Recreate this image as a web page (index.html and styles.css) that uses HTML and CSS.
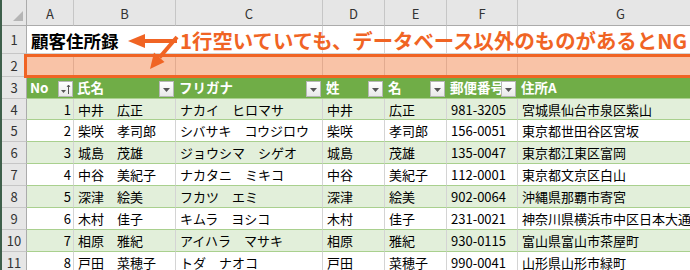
FILE: index.html
```html
<!DOCTYPE html>
<html lang="ja">
<head>
<meta charset="utf-8">
<link rel="stylesheet" href="styles.css">
</head>
<body>
<div class="sheet">
  <div class="row colhdr">
    <div class="rh corner"><span class="tri"></span></div>
    <div class="ch">A</div><div class="ch">B</div><div class="ch">C</div><div class="ch">D</div><div class="ch">E</div><div class="ch">F</div><div class="ch">G</div>
  </div>
  <div class="row r1">
    <div class="rh">1</div>
    <div class="c noline title">顧客住所録</div><div class="c noline"></div><div class="c"></div><div class="c"></div><div class="c"></div><div class="c"></div><div class="c"></div>
  </div>
  <div class="row r2">
    <div class="rh">2</div>
    <div class="c"></div><div class="c"></div><div class="c"></div><div class="c"></div><div class="c"></div><div class="c"></div><div class="c"></div>
  </div>
  <div class="row th">
    <div class="rh">3</div>
    <div class="h">No<span class="fbtn sort"><svg width="13" height="14" viewBox="0 0 13 14"><path d="M2 8h5l-2.5 3z" fill="#555"/><path d="M9.5 3v9M8 5l1.5-2 1.5 2" stroke="#555" stroke-width="1" fill="none"/></svg></span></div>
    <div class="h">氏名<span class="fbtn"><svg width="13" height="14" viewBox="0 0 13 14"><path d="M3 6h7l-3.5 4z" fill="#555"/></svg></span></div>
    <div class="h">フリガナ<span class="fbtn"><svg width="13" height="14" viewBox="0 0 13 14"><path d="M3 6h7l-3.5 4z" fill="#555"/></svg></span></div>
    <div class="h">姓<span class="fbtn"><svg width="13" height="14" viewBox="0 0 13 14"><path d="M3 6h7l-3.5 4z" fill="#555"/></svg></span></div>
    <div class="h">名<span class="fbtn"><svg width="13" height="14" viewBox="0 0 13 14"><path d="M3 6h7l-3.5 4z" fill="#555"/></svg></span></div>
    <div class="h">郵便番号<span class="fbtn"><svg width="13" height="14" viewBox="0 0 13 14"><path d="M3 6h7l-3.5 4z" fill="#555"/></svg></span></div>
    <div class="h">住所A</div>
  </div>
  <div class="row d g first">
    <div class="rh">4</div>
    <div class="c num">1</div><div class="c">中井　広正</div><div class="c">ナカイ　ヒロマサ</div><div class="c">中井</div><div class="c">広正</div><div class="c">981-3205</div><div class="c">宮城県仙台市泉区紫山</div>
  </div>
  <div class="row d">
    <div class="rh">5</div>
    <div class="c num">2</div><div class="c">柴咲　孝司郎</div><div class="c">シバサキ　コウジロウ</div><div class="c">柴咲</div><div class="c">孝司郎</div><div class="c">156-0051</div><div class="c">東京都世田谷区宮坂</div>
  </div>
  <div class="row d g">
    <div class="rh">6</div>
    <div class="c num">3</div><div class="c">城島　茂雄</div><div class="c">ジョウシマ　シゲオ</div><div class="c">城島</div><div class="c">茂雄</div><div class="c">135-0047</div><div class="c">東京都江東区富岡</div>
  </div>
  <div class="row d">
    <div class="rh">7</div>
    <div class="c num">4</div><div class="c">中谷　美紀子</div><div class="c">ナカタニ　ミキコ</div><div class="c">中谷</div><div class="c">美紀子</div><div class="c">112-0001</div><div class="c">東京都文京区白山</div>
  </div>
  <div class="row d g">
    <div class="rh">8</div>
    <div class="c num">5</div><div class="c">深津　絵美</div><div class="c">フカツ　エミ</div><div class="c">深津</div><div class="c">絵美</div><div class="c">902-0064</div><div class="c">沖縄県那覇市寄宮</div>
  </div>
  <div class="row d">
    <div class="rh">9</div>
    <div class="c num">6</div><div class="c">木村　佳子</div><div class="c">キムラ　ヨシコ</div><div class="c">木村</div><div class="c">佳子</div><div class="c">231-0021</div><div class="c">神奈川県横浜市中区日本大通</div>
  </div>
  <div class="row d g">
    <div class="rh">10</div>
    <div class="c num">7</div><div class="c">相原　雅紀</div><div class="c">アイハラ　マサキ</div><div class="c">相原</div><div class="c">雅紀</div><div class="c">930-0115</div><div class="c">富山県富山市茶屋町</div>
  </div>
  <div class="row d">
    <div class="rh">11</div>
    <div class="c num">8</div><div class="c">戸田　菜穂子</div><div class="c">トダ　ナオコ</div><div class="c">戸田</div><div class="c">菜穂子</div><div class="c">990-0041</div><div class="c">山形県山形市緑町</div>
  </div>

  <div class="hilite"></div>
  <div class="callout">1行空いていても、データベース以外のものがあるとNG</div>
  <svg class="arrows" width="200" height="80" viewBox="0 0 200 80">
    <polygon points="128,41 145,34 145,48" fill="#f06424"/>
    <rect x="144" y="39" width="33" height="4" fill="#f06424"/>
    <line x1="177" y1="37" x2="159.5" y2="57.5" stroke="#f06424" stroke-width="4"/>
    <polygon points="150,69 164.5,62 154,52.5" fill="#f06424"/>
  </svg>
</div>
</body>
</html>
```

FILE: styles.css
```css
html, body {
  margin: 0;
  padding: 0;
  background: #fff;
}
body {
  width: 690px;
  height: 270px;
  overflow: hidden;
  font-family: "Noto Sans CJK JP", "Noto Sans", sans-serif;
  font-size: 13px;
  color: #000;
}
.sheet {
  position: relative;
  width: 724px;
  height: 270px;
  border-left: 2px solid #3e5f4b;
  box-sizing: border-box;
}
.row {
  display: grid;
  grid-template-columns: 25px 47px 102px 147px 62px 62px 71px 206px;
  height: 22px;
}
.row > div {
  box-sizing: border-box;
  display: flex;
  align-items: center;
  white-space: nowrap;
  overflow: hidden;
  line-height: 1;
}
.rh {
  background: #e6e6e6;
  border-right: 1px solid #ababab;
  border-bottom: 1px solid #c6c6c6;
  justify-content: center;
  color: #333;
  font-size: 13px;
}
.colhdr { height: 26px; }
.colhdr .rh, .colhdr .ch {
  border-bottom: 1px solid #ababab;
}
.corner { position: relative; }
.tri {
  position: absolute;
  right: 3px;
  bottom: 4px;
  width: 0;
  height: 0;
  border-left: 10px solid transparent;
  border-bottom: 10px solid #b5b5b5;
}
.ch {
  background: #e6e6e6;
  border-right: 1px solid #c6c6c6;
  justify-content: center;
  color: #333;
  padding-top: 2px;
}
.c {
  border-right: 1px solid #d4d4d4;
  border-bottom: 1px solid #d4d4d4;
  padding-left: 4px;
}
.r1 { height: 28px; }
.r1 .noline { border-right: none; }
.r1 .title {
  overflow: visible !important;
  font-size: 17.5px;
  font-weight: bold;
  padding-left: 4px;
  padding-top: 2px;
}
.r2 { height: 23px; }
.r2 .c {
  background: #f9c3a7;
  border-right-color: #e2ab90;
}
.th .h {
  position: relative;
  background: #70ad47;
  color: #fff;
  font-weight: bold;
  font-size: 13.5px;
  padding-left: 3px;
  border-bottom: 1px solid #a9d08e;
}
.fbtn {
  position: absolute;
  right: 2px;
  top: 4px;
  width: 15px;
  height: 16px;
  box-sizing: border-box;
  background: linear-gradient(#ffffff, #e9e9e9);
  border: 1px solid #b7b7b7;
  display: flex;
  align-items: center;
  justify-content: center;
}
.fbtn.sort { right: 1px; }
.d .c {
  border-bottom: 1px solid #a9d08e;
}
.d.g .c { background: #e2efda; }
.d.first { height: 21px; }
.c.num {
  justify-content: flex-end;
  padding-left: 0;
  padding-right: 2px;
}
.hilite {
  position: absolute;
  left: 22px;
  top: 54px;
  width: 700px;
  height: 24px;
  box-sizing: border-box;
  border: 3px solid #f06424;
}
.callout {
  position: absolute;
  left: 178px;
  top: 30px;
  font-size: 20.4px;
  line-height: 20px;
  font-weight: bold;
  color: #f06424;
  white-space: nowrap;
}
.arrows {
  position: absolute;
  left: -2px;
  top: 0;
}
```
